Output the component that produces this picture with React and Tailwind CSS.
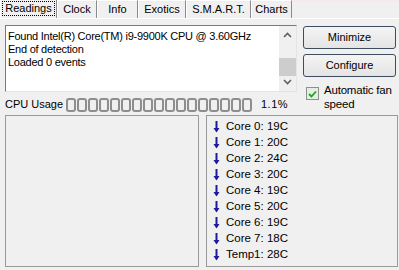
import React from 'react';

const TABS = ['Readings', 'Clock', 'Info', 'Exotics', 'S.M.A.R.T.', 'Charts'];
const TABW = [57, 40, 41, 48, 65, 41];
const LOG = ['Found Intel(R) Core(TM) i9-9900K CPU @ 3.60GHz', 'End of detection', 'Loaded 0 events'];
const TEMPS = [
  ['Core 0', '19C'], ['Core 1', '20C'], ['Core 2', '24C'], ['Core 3', '20C'], ['Core 4', '19C'],
  ['Core 5', '20C'], ['Core 6', '19C'], ['Core 7', '18C'], ['Temp1', '28C'],
];

const DownArrow = () => (
  <svg width="7" height="12" viewBox="0 0 7 12" className="shrink-0">
    <path d="M3.5 0 V10" stroke="#1c1c9c" strokeWidth="2" />
    <path d="M0.5 7 L3.5 11.5 L6.5 7 Z" fill="#1c1c9c" />
  </svg>
);

function Tab({ label, w, active }) {
  return (
    <div
      className={
        'flex items-center justify-center border-l border-l-white border-r border-r-[#8a8a8a] ' +
        (active ? 'h-[20px] border-t border-t-white bg-[#f0f0f0]' : 'h-[18px] border-t border-t-white')
      }
      style={{ width: w }}
    >
      {active ? (
        <span className="border border-dotted border-black px-[2px] leading-[13px]">{label}</span>
      ) : (
        <span className="leading-[13px]">{label}</span>
      )}
    </div>
  );
}

function Button({ children }) {
  return (
    <div className="h-[23px] w-[93px] rounded-[3px] border border-[#3e4d5e] bg-gradient-to-b from-[#f4f4f4] to-[#e4e4e4] flex items-center justify-center">
      {children}
    </div>
  );
}

export default function App() {
  return (
    <div
      className="w-[399px] h-[270px] bg-[#f0f0f0] overflow-hidden text-[11px] text-black"
      style={{ fontFamily: '"Liberation Sans", Arial, sans-serif' }}
    >
      <div className="h-[2px] bg-[#f6eaea]" />
      <div className="h-[19px] flex items-end border-b border-b-white -mt-[2px]">
        {TABS.map((t, i) => (
          <Tab key={t} label={t} w={TABW[i]} active={i === 0} />
        ))}
      </div>

      <div className="flex pl-[5px] pt-[6px]">
        <div className="flex flex-col w-[292px]">
          <div className="h-[67px] flex border border-t-[#7a7a7a] border-l-[#7a7a7a] border-r-[#e4e4e4] border-b-[#e4e4e4] bg-white">
            <div className="flex-1 pl-[2px] pt-[4px] leading-[13px] tracking-[-0.25px]">
              {LOG.map((l) => (
                <div key={l}>{l}</div>
              ))}
            </div>
            <div className="w-[17px] flex flex-col items-center bg-[#f0f0f0]">
              <svg width="9" height="17" viewBox="0 0 9 17">
                <path d="M1 11 L4.5 7.5 L8 11" stroke="#606060" strokeWidth="1.6" fill="none" />
              </svg>
              <div className="mt-[15px] w-[17px] h-[18px] bg-[#cdcdcd]" />
              <div className="flex-1" />
              <svg width="9" height="14" viewBox="0 0 9 14">
                <path d="M1 3 L4.5 6.5 L8 3" stroke="#606060" strokeWidth="1.6" fill="none" />
              </svg>
            </div>
          </div>
          <div className="mt-[5px] h-[15px] flex items-center">
            <span className="w-[61px] leading-[13px]">CPU Usage</span>
            <div className="flex gap-[1px]">
              {Array.from({ length: 17 }).map((_, i) => (
                <div key={i} className="w-[10px] h-[14px] rounded-[3px] border-2 border-[#8e8e8e]" />
              ))}
            </div>
            <span className="ml-[9px] tracking-[0.5px]">1.1%</span>
          </div>
        </div>

        <div className="flex flex-col ml-[6px] pt-[1px]">
          <Button>Minimize</Button>
          <div className="h-[5px]" />
          <Button>Configure</Button>
          <div className="flex mt-[6px] ml-[3px] gap-[5px]">
            <div className="mt-[4px] w-[13px] h-[13px] border border-[#8e8f8f] bg-[#e3efe3] flex items-center justify-center">
              <svg width="9" height="8" viewBox="0 0 9 8">
                <path d="M1 4 L3.5 6.5 L8 1.5" stroke="#21a121" strokeWidth="1.8" fill="none" />
              </svg>
            </div>
            <div className="leading-[14px] text-[11.5px] tracking-[-0.2px]">
              <div>Automatic fan</div>
              <div>speed</div>
            </div>
          </div>
        </div>
      </div>

      <div className="flex pl-[5px] mt-[3px] gap-[7px]">
        <div className="w-[194px] h-[152px] border border-[#9a9a9a] bg-[#f0f0f0]" />
        <div className="w-[192px] h-[152px] border border-[#9a9a9a] bg-[#f0f0f0] pt-[3px] pl-[6px]">
          {TEMPS.map(([n, v]) => (
            <div key={n} className="h-[16px] flex items-center gap-[6px] text-[11.5px]">
              <DownArrow />
              <span>
                {n}: {v}
              </span>
            </div>
          ))}
        </div>
      </div>
    </div>
  );
}
